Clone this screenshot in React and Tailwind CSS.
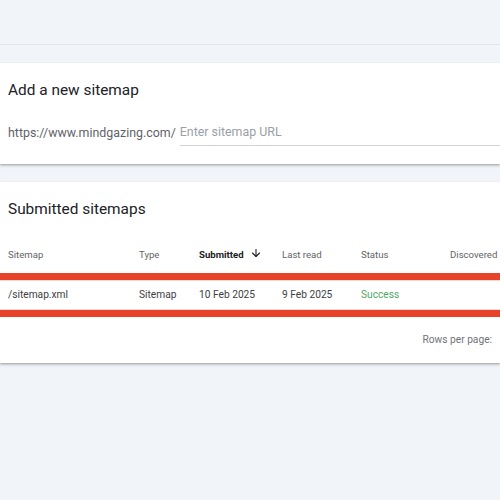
import React from 'react';
import { ArrowDown } from 'lucide-react';

const cols = [
  { label: 'Sitemap', w: 'w-[131px]' },
  { label: 'Type', w: 'w-[60px]' },
  { label: 'Submitted', w: 'w-[83px]', active: true },
  { label: 'Last read', w: 'w-[79px]' },
  { label: 'Status', w: 'w-[89px]' },
  { label: 'Discovered pages', w: 'w-[120px]' },
];

const row = ['/sitemap.xml', 'Sitemap', '10 Feb 2025', '9 Feb 2025', 'Success', ''];

function Card({ children, className = '' }) {
  return (
    <div className={`bg-white shadow-[0_1px_2px_rgba(60,64,67,0.35),0_2px_3px_rgba(60,64,67,0.15)] ${className}`}>
      {children}
    </div>
  );
}

export default function App() {
  return (
    <div className="w-[500px] h-[500px] overflow-hidden bg-[#f1f4f9] text-[#202124]" style={{ fontFamily: 'Roboto, "Liberation Sans", sans-serif' }}>
      <div className="h-[45px] border-b border-[#e2e5ea]" />

      <div className="pt-[18px] flex flex-col gap-[18px]">
        <Card className="h-[101px] pt-[15px] pl-2">
          <h2 className="text-[15.4px] leading-6 font-normal">Add a new sitemap</h2>
          <div className="flex items-end mt-[17px]">
            <span className="text-[12.4px] leading-6 text-[#5f6368] pb-[1px]">https://www.mindgazing.com/</span>
            <div className="flex-1 ml-[4px] border-b border-[#d0d3d6] pb-[1px]">
              <span className="text-[12.4px] leading-6 text-[#9aa0a6]">Enter sitemap URL</span>
            </div>
          </div>
        </Card>

        <Card className="h-[181px] pt-[15px]">
          <h2 className="text-[15.4px] leading-6 font-normal pl-2">Submitted sitemaps</h2>
          <div className="mt-[16px] h-[36px] flex items-center pl-2 whitespace-nowrap">
            {cols.map(c => (
              <div key={c.label} className={`${c.w} shrink-0 flex items-center gap-[6px] text-[9.6px] ${c.active ? 'font-bold text-[#202124]' : 'text-[#5f6368]'}`}>
                {c.label}
                {c.active && <ArrowDown className="w-[12px] h-[12px] -mt-[3px]" strokeWidth={2.2} />}
              </div>
            ))}
          </div>
          <div className="border-y-[7px] border-[#e8432a]">
            <div className="h-[30px] flex items-center pl-2 whitespace-nowrap border-y border-[#fbd9d3]">
              {row.map((v, i) => (
                <div key={i} className={`${cols[i].w} shrink-0 text-[10.2px] ${i === 4 ? 'text-[#4fa868]' : 'text-[#3c4043]'}`}>
                  {v}
                </div>
              ))}
            </div>
          </div>
          <div className="h-[46px] flex items-center justify-end pr-2">
            <span className="text-[10.2px] text-[#6f7378]">Rows per page:</span>
          </div>
        </Card>
      </div>
    </div>
  );
}
